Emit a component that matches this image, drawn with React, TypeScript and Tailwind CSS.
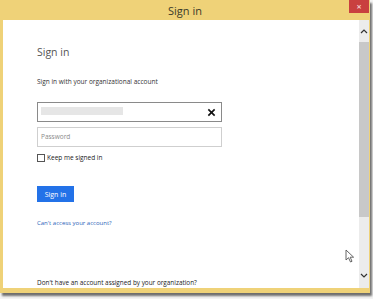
import React from "react";

const App: React.FC = () => {
  return (
    <div className="w-[373px] h-[299px] bg-[#f4f4f4] overflow-hidden font-['Open_Sans',sans-serif]">
      {/* Window frame */}
      <div className="w-[370px] h-[293px] bg-[#efd278] flex flex-col shadow-[2px_3px_2px_rgba(0,0,0,0.55)]">
        {/* Title bar */}
        <div className="relative h-[20px] flex items-center justify-center">
          <span className="text-[11px] text-[#3a3a2a] leading-none">Sign in</span>
          <div className="absolute right-[1px] top-0 w-[20px] h-[13px] bg-[#c9403f] flex items-center justify-center">
            <span className="text-[9px] leading-none text-[#f3c7c6] font-bold">×</span>
          </div>
        </div>

        {/* Body */}
        <div className="flex flex-1 mx-[3px] mb-[5px] mr-[1px] bg-white">
          <div className="flex-1 flex flex-col pl-[34px] pt-[27px] pr-[4px]">
            <h1 className="text-[10.5px] text-[#555] leading-none">Sign in</h1>
            <p className="mt-[21px] text-[6.5px] text-[#333] leading-none">
              Sign in with your organizational account
            </p>

            <div className="mt-[17px] w-[185px] h-[20px] border border-[#8a8a8a] flex items-center pl-[3px] pr-[5px]">
              <div className="w-[82px] h-[8px] bg-[#e6e6e6] -mt-[2px]" />
              <div className="flex-1" />
              <svg width="9" height="9" viewBox="0 0 10 10">
                <path d="M1.5 1.5 L8.5 8.5 M8.5 1.5 L1.5 8.5" stroke="#111" strokeWidth="1.8" />
              </svg>
            </div>

            <div className="mt-[5px] w-[185px] h-[20px] border border-[#cfcfcf] flex items-center pl-[3px]">
              <span className="text-[6.5px] text-[#8a8a8a] leading-none">Password</span>
            </div>

            <div className="mt-[7px] flex items-center gap-[2px]">
              <div className="w-[8px] h-[8px] border border-[#555] bg-white" />
              <span className="text-[6.5px] text-[#222] leading-none">Keep me signed in</span>
            </div>

            <button className="mt-[24px] w-[37px] h-[16px] bg-[#2372e8] text-white text-[7px] leading-none flex items-center justify-center">
              Sign in
            </button>

            <a className="mt-[18px] text-[6px] text-[#2b5fb8] leading-none">
              Can't access your account?
            </a>

            <div className="flex-1" />
            <p className="mb-[2px] text-[6.4px] text-[#222] leading-none">
              Don't have an account assigned by your organization?
            </p>
          </div>

          {/* Cursor */}
          <div className="relative w-0">
            <svg className="absolute left-[-14px] top-[229px]" width="11" height="14" viewBox="0 0 11 14">
              <path d="M1 1 L1 11 L3.5 8.7 L5.5 13 L7 12.3 L5.2 8.2 L8.6 8.2 Z" fill="#fff" stroke="#555" strokeWidth="0.9" />
            </svg>
          </div>

          {/* Scrollbar */}
          <div className="w-[10px] bg-[#ececec] flex flex-col items-center">
            <svg className="mt-[9px]" width="8" height="5" viewBox="0 0 8 5">
              <path d="M1 4 L4 1 L7 4" stroke="#333" strokeWidth="1.2" fill="none" />
            </svg>
            <div className="mt-[8px] w-[10px] h-[175px] bg-[#c8c8c8]" />
            <div className="flex-1" />
            <svg className="mb-[10px]" width="8" height="5" viewBox="0 0 8 5">
              <path d="M1 1 L4 4 L7 1" stroke="#333" strokeWidth="1.2" fill="none" />
            </svg>
          </div>
        </div>
      </div>
    </div>
  );
};

export default App;
